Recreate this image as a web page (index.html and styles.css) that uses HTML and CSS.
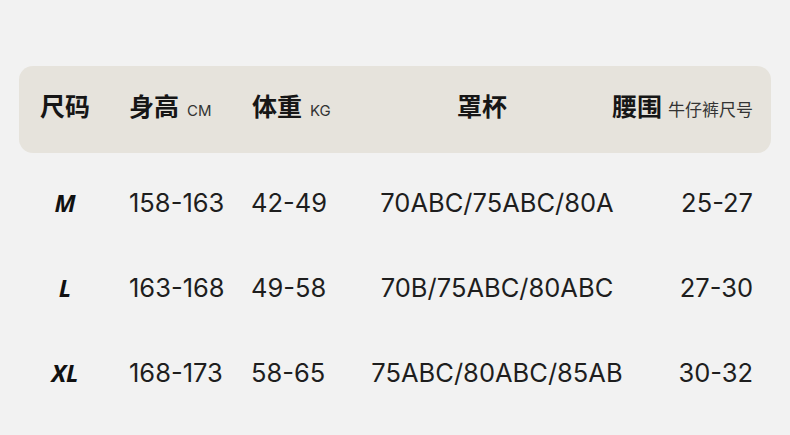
FILE: index.html
```html
<!DOCTYPE html>
<html lang="zh">
<head>
<meta charset="utf-8">
<link rel="stylesheet" href="styles.css">
</head>
<body>
<div class="page">
  <div class="table">
    <div class="row head">
      <div class="c1">尺码</div>
      <div class="c2">身高<span class="unit">CM</span></div>
      <div class="c3">体重<span class="unit">KG</span></div>
      <div class="c4"><span class="cuphead">罩杯</span></div>
      <div class="c5"><span>腰围</span><span class="unit cn">牛仔裤尺号</span></div>
    </div>
    <div class="body">
      <div class="row">
        <div class="c1 size">M</div>
        <div class="c2">158-163</div>
        <div class="c3">42-49</div>
        <div class="c4">70ABC/75ABC/80A</div>
        <div class="c5">25-27</div>
      </div>
      <div class="row">
        <div class="c1 size">L</div>
        <div class="c2">163-168</div>
        <div class="c3">49-58</div>
        <div class="c4">70B/75ABC/80ABC</div>
        <div class="c5">27-30</div>
      </div>
      <div class="row">
        <div class="c1 size">XL</div>
        <div class="c2">168-173</div>
        <div class="c3">58-65</div>
        <div class="c4">75ABC/80ABC/85AB</div>
        <div class="c5">30-32</div>
      </div>
    </div>
  </div>
</div>
</body>
</html>
```
FILE: styles.css
```css
html, body {
  margin: 0;
  padding: 0;
  background: #f2f2f2;
}
.page {
  width: 790px;
  height: 435px;
  padding: 66px 19px 0 19px;
  box-sizing: border-box;
  font-family: Inter, "Noto Sans CJK SC", sans-serif;
  color: #1e1e1e;
}
.row {
  display: grid;
  grid-template-columns: 92px 140px 117px 258px 145px;
  align-items: center;
  box-sizing: border-box;
  height: 85px;
  padding-bottom: 2px;
  font-size: 25.5px;
  line-height: 1;
  white-space: nowrap;
}
.head {
  height: 87px;
  padding-bottom: 8px;
  background: #e6e3dc;
  border-radius: 14px;
  font-family: "Noto Sans CJK SC", sans-serif;
  font-size: 25px;
  font-weight: 700;
  color: #161616;
}
.body {
  padding-top: 8px;
}
.c1 {
  text-align: center;
}
.c2 {
  padding-left: 18px;
}
.c3 {
  padding-left: 0;
}
.head .c3 {
  padding-left: 1px;
}
.c4 {
  text-align: center;
}
.c5 {
  display: flex;
  justify-content: flex-end;
  align-items: baseline;
  padding-right: 18px;
}
.cuphead {
  display: inline-block;
  margin-right: 30px;
}
.unit {
  font-family: Inter, sans-serif;
  font-size: 15px;
  font-weight: 400;
  margin-left: 8px;
  color: #333;
}
.unit.cn {
  font-family: "Noto Sans CJK SC", sans-serif;
  font-size: 17px;
  margin-left: 6px;
}
.size {
  font-family: "Noto Sans", "Open Sans", sans-serif;
  font-style: italic;
  font-weight: 700;
  font-size: 24px;
  color: #111;
}
```
